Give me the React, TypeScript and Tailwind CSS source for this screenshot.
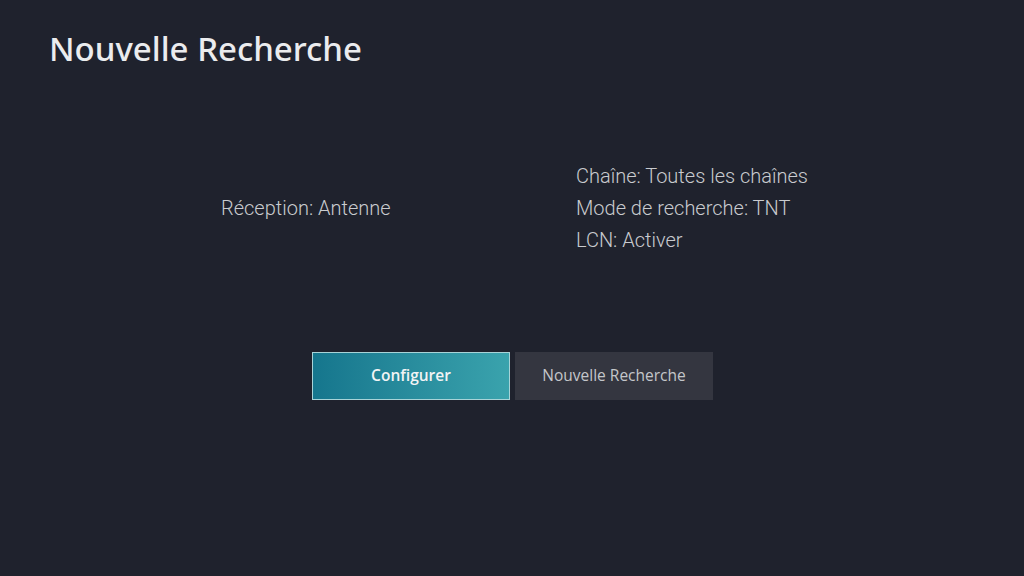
export default function App() {
  return (
    <div className="w-[1024px] h-[576px] bg-[#1f222d] flex flex-col overflow-hidden font-['Roboto','Noto_Sans',sans-serif]">
      <h1 className="pl-[49px] pt-[28px] text-[33px] leading-[42px] text-[#ebecee] font-medium font-['Noto_Sans',sans-serif]">
        Nouvelle Recherche
      </h1>
      <div className="mt-[90px] pl-[221px] grid grid-cols-[355px_auto] items-center text-[20px] leading-[32px] text-[#c9cbcf] font-light">
        <div>Réception: Antenne</div>
        <div className="flex flex-col">
          <span>Chaîne: Toutes les chaînes</span>
          <span>Mode de recherche: TNT</span>
          <span>LCN: Activer</span>
        </div>
      </div>
      <div className="mt-[96px] flex justify-center gap-[5px] pl-[1px] font-['Open_Sans',sans-serif]">
        <button className="w-[198px] h-[48px] bg-gradient-to-r from-[#15768d] to-[#3aa3ad] border border-[#a8d4d8] text-[#f2f4f5] text-[15.5px] font-semibold">
          Configurer
        </button>
        <button className="w-[198px] h-[48px] bg-[#343640] text-[#c4c6ca] text-[15.5px]">
          Nouvelle Recherche
        </button>
      </div>
    </div>
  );
}
